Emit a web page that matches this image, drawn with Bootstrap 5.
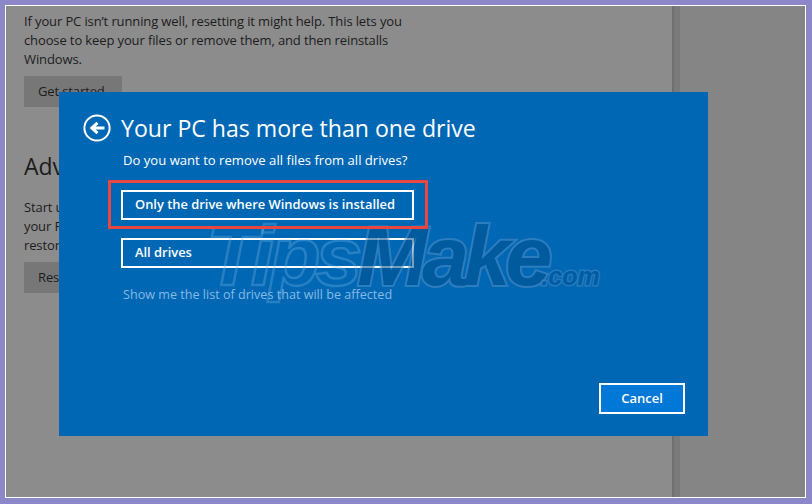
<!DOCTYPE html>
<html lang="en">
<head>
<meta charset="utf-8">
<title>Reset this PC</title>
<link rel="stylesheet" href="https://cdn.jsdelivr.net/npm/bootstrap@5.3.0/dist/css/bootstrap.min.css">
<style>
html,body{height:100%;margin:0}
body{background:#8b87c9;font-family:"Open Sans","Noto Sans",sans-serif;overflow:hidden}
.shot-frame{position:relative;width:801px;height:493px;margin:5px 0 0 5px;border:1px solid #fff;background:#858585;overflow:hidden}
.left-pane{width:666px;background:#8c8c8c;color:#1c1c1c;padding:6px 0 0 18px}
.split-bar{width:8px;background:#7a7a7a;border-left:2px solid #6f6f6f}
.right-pane{background:#858585}
.body-copy{font-size:13px;letter-spacing:-.12px;line-height:19px;margin:0;white-space:nowrap}
.grey-btn{background:#777;font-size:13px;letter-spacing:-.12px;line-height:31px;width:98px;padding-left:14px;margin-top:7px}
.sec-head{font-size:23px;line-height:30px;margin:44px 0 17px}
.dialog-box{position:absolute;left:53px;top:86px;width:649px;height:344px;background:#0067b5;color:#fff;padding:20px 24px 0 24px}
.back-disc{width:28px;height:28px;flex:none}
.dlg-title{font-size:23.1px;line-height:32px;margin:0 0 0 10px;font-weight:400}
.dlg-sub{font-size:13.1px;line-height:20px;margin:6px 0 0 40px}
.choice-btn{display:block;width:293px;height:30px;margin-left:38px;border:2px solid #fff;background:transparent;color:#fff;font-size:12.9px;font-weight:600;line-height:24px;text-align:left;padding:0 0 2px 12px;border-radius:0}
.choice-one{margin-top:20px}
.choice-two{margin-top:18px}
.drive-link{font-size:12.6px;line-height:20px;color:#86bbe4;margin:17px 0 0 40px}
.cancel-btn{position:absolute;right:23px;bottom:22px;width:86px;height:31px;border:2px solid #fff;background:#0078d7;color:#fff;font-size:13px;font-weight:600;line-height:26px;padding:0 0 1px;border-radius:0}
.red-mark{position:absolute;left:102px;top:174px;width:320px;height:49px;border:3px solid #e8473f;pointer-events:none}
.mark-word{position:absolute;left:200px;top:205px;font-family:"Liberation Sans",sans-serif;font-weight:700;font-style:italic;white-space:nowrap;line-height:90px;font-size:84px;letter-spacing:-5px;color:transparent;-webkit-text-stroke:2.5px rgba(130,185,225,.3);pointer-events:none}
.mark-dark{color:#00508c;-webkit-text-stroke:4px #528fc6;paint-order:stroke fill;opacity:.55}
.mark-tld{font-size:25px;letter-spacing:0;margin-left:-6px;color:#00508c;-webkit-text-stroke:3px #528fc6;paint-order:stroke fill;opacity:.45}
</style>
</head>
<body>
<div class="shot-frame d-flex">
  <div class="left-pane flex-shrink-0">
    <p class="body-copy">If your PC isn’t running well, resetting it might help. This lets you<br>choose to keep your files or remove them, and then reinstalls<br>Windows.</p>
    <div class="grey-btn">Get started</div>
    <div class="sec-head">Adv</div>
    <p class="body-copy">Start u<br>your P<br>restor</p>
    <div class="grey-btn">Res</div>
  </div>
  <div class="split-bar flex-shrink-0"></div>
  <div class="right-pane flex-grow-1"></div>

  <div class="dialog-box">
    <div class="d-flex align-items-center">
      <svg class="back-disc" viewBox="0 0 28 28" aria-hidden="true"><circle cx="14" cy="14" r="12.6" fill="none" stroke="#fff" stroke-width="2"/><path d="M21.5 14H10M14.5 8.8 8.8 14l5.7 5.2" fill="none" stroke="#fff" stroke-width="3"/></svg>
      <h1 class="dlg-title">Your PC has more than one drive</h1>
    </div>
    <p class="dlg-sub">Do you want to remove all files from all drives?</p>
    <button class="choice-btn choice-one" type="button">Only the drive where Windows is installed</button>
    <button class="choice-btn choice-two" type="button">All drives</button>
    <p class="drive-link">Show me the list of drives that will be affected</p>
    <button class="cancel-btn" type="button">Cancel</button>
  </div>
  <div class="mark-word">Tips<span class="mark-dark">Make</span><span class="mark-tld">.com</span></div>
  <div class="red-mark"></div>
</div>
</body>
</html>
